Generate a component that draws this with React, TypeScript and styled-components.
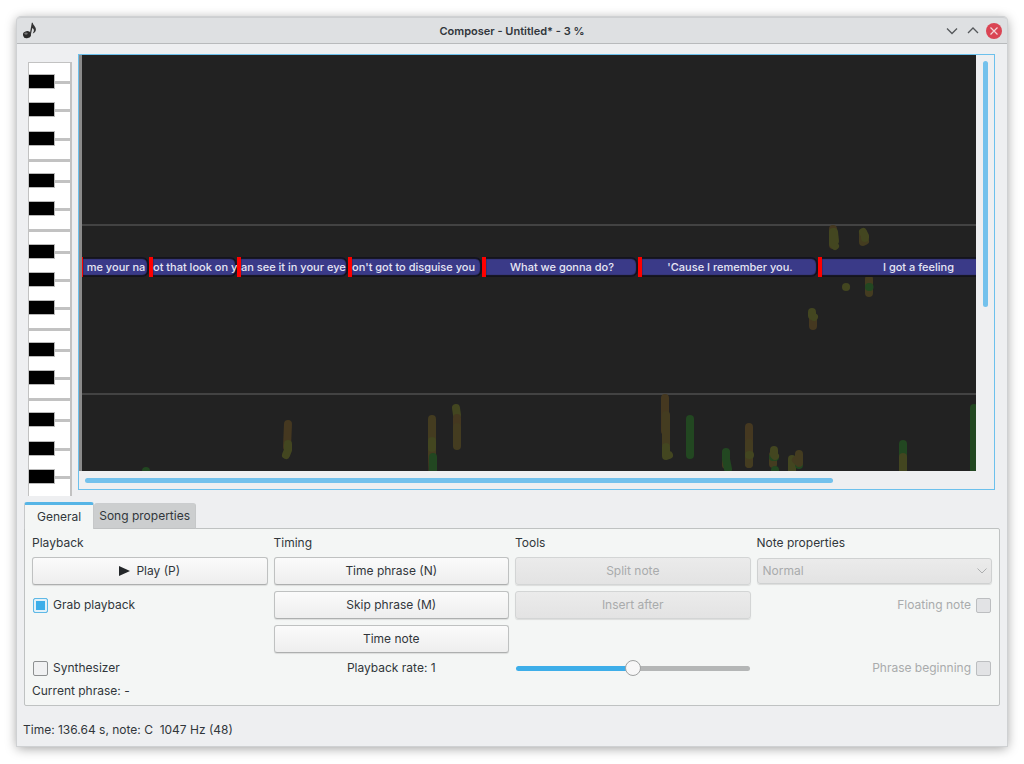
import React, { useState } from "react";
import styled, { createGlobalStyle } from "styled-components";

const GlobalStyle = createGlobalStyle`
  *, *::before, *::after { box-sizing: border-box; }
  body {
    margin: 0;
    background: #ffffff;
    color: #31363b;
    font: 12px/16px Inter, "Noto Sans", sans-serif;
  }
  button, input, select { font: inherit; color: inherit; margin: 0; }
`;

const Desktop = styled.div`
  display: flex;
  min-height: 100vh;
  padding: 17px 17px 18px;
`;

const Window = styled.div`
  flex: 1;
  min-width: 0;
  display: flex;
  flex-direction: column;
  background: #eeeff1;
  border-radius: 4px 4px 0 0;
  box-shadow: 0 0 0 1px #cfd1d3, 0 2px 12px rgba(0, 0, 0, 0.4);
`;

const TitleBar = styled.header`
  display: grid;
  grid-template-columns: 1fr auto 1fr;
  align-items: center;
  height: 27px;
  padding: 0 5px;
  background: #dee0e2;
  border-top: 1px solid #cdcfd1;
  border-bottom: 1px solid #b8babc;
  border-radius: 4px 4px 0 0;
`;

const Title = styled.h1`
  margin: 0;
  font-size: 11px;
  line-height: 16px;
  font-weight: 600;
`;

const WindowButtons = styled.div`
  display: flex;
  justify-content: flex-end;
  gap: 5px;
`;

const WindowButton = styled.button`
  display: flex;
  padding: 0;
  border: 0;
  background: none;
`;

const Editor = styled.main`
  flex: 1;
  display: flex;
  gap: 6px;
  padding: 10px 12px 0 11px;
`;

const Piano = styled.svg`
  flex: none;
  width: 44px;
  height: 434px;
  margin: 8px 0 6px;
`;

const ScoreFrame = styled.section`
  flex: 1;
  min-width: 0;
  display: grid;
  grid-template-columns: minmax(0, 1fr) 18px;
  grid-template-rows: minmax(0, 1fr) 18px;
  margin-bottom: 12px;
  border: 1px solid #6cc0ec;
`;

const Score = styled.div`
  position: relative;
  overflow: hidden;
  background: #222222;
  border-left: 3px solid #8a8a8a;
`;

const Pitch = styled.svg`
  position: absolute;
  top: 0;
  left: 0;
  width: 100%;
  height: 100%;
`;

const PhraseLane = styled.div`
  position: absolute;
  top: 202px;
  left: 0;
  display: flex;
  height: 20px;
`;

const Phrase = styled.div<{ $width: number; $start?: boolean }>`
  flex: none;
  display: flex;
  align-items: center;
  justify-content: ${(p) => (p.$start ? "flex-start" : "center")};
  width: ${(p) => p.$width}px;
  border-left: 4px solid #ff0000;
  background: #3a3a88;
  background-clip: padding-box;
  color: #e6e6f4;
  font-size: 11px;
  font-weight: 500;
  white-space: nowrap;
  border-radius: 0 7px 7px 0;
  box-shadow: inset 0 2px 1px #14141c, inset 0 -2px 1px #14141c, inset -2px 0 1px #14141c;
  &:first-child { border-left-width: 1px; }
`;

const ScrollTrack = styled.div<{ $vertical?: boolean }>`
  padding: ${(p) => (p.$vertical ? "6px 6px 0 7px" : "7px 0 6px 6px")};
`;

const ScrollThumb = styled.div<{ $vertical?: boolean }>`
  width: ${(p) => (p.$vertical ? "5px" : "84%")};
  height: ${(p) => (p.$vertical ? "60%" : "5px")};
  border-radius: 3px;
  background: #73c1ec;
`;

const Tabs = styled.div`
  display: flex;
  align-items: flex-end;
  padding: 0 7px;
  margin-bottom: -1px;
  z-index: 1;
`;

const Tab = styled.button<{ $active?: boolean }>`
  height: ${(p) => (p.$active ? 27 : 26)}px;
  padding: 0 ${(p) => (p.$active ? 12 : 5)}px;
  border: 1px solid #c6c8c9;
  border-top: ${(p) => (p.$active ? "3px solid #56b5e6" : "1px solid #cbcdcf")};
  border-bottom: ${(p) => (p.$active ? "0" : "1px solid #bfc1c2")};
  border-left-width: ${(p) => (p.$active ? 1 : 0)}px;
  border-radius: 3px 3px 0 0;
  background: ${(p) => (p.$active ? "#f4f6f5" : "#cccecf")};
`;

const Panel = styled.section`
  display: grid;
  grid-template-columns: repeat(4, minmax(0, 1fr));
  grid-template-rows: 16px 28px 28px 28px 18px 16px;
  gap: 6px;
  margin: 0 7px;
  padding: 6px 7px;
  border: 1px solid #bfc2c2;
  border-radius: 0 2px 2px 2px;
  background: #f4f6f5;
`;

const GroupTitle = styled.h2`
  margin: 0;
  font-size: 12px;
  line-height: 16px;
  font-weight: 400;
`;

const Button = styled.button`
  display: flex;
  align-items: center;
  justify-content: center;
  gap: 6px;
  border: 1px solid #bfc1c1;
  border-bottom-color: #adafaf;
  border-radius: 3px;
  background: linear-gradient(#fbfbfb, #eeeeee);
  box-shadow: 0 1px 1px rgba(0, 0, 0, 0.1);
  &:disabled {
    color: #a9abac;
    border-color: #d3d5d5;
    background: linear-gradient(#ebebeb, #e3e3e3);
  }
`;

const SelectWrap = styled.div`
  display: grid;
  align-items: center;
  & > * { grid-area: 1 / 1; }
  & > svg { justify-self: end; margin-right: 5px; pointer-events: none; }
`;

const Select = styled.select`
  appearance: none;
  height: 26px;
  padding: 0 5px;
  border: 1px solid #cfd1d1;
  border-radius: 3px;
  background: linear-gradient(#ebebeb, #e3e3e3);
  box-shadow: 0 1px 1px rgba(0, 0, 0, 0.1);
  &:disabled { color: #a9abac; opacity: 1; }
`;

const CheckLabel = styled.label<{ $row: number; $column: number; $trailing?: boolean }>`
  grid-row: ${(p) => p.$row};
  grid-column: ${(p) => p.$column};
  justify-self: ${(p) => (p.$trailing ? "end" : "start")};
  display: flex;
  flex-direction: ${(p) => (p.$trailing ? "row-reverse" : "row")};
  align-items: center;
  gap: 5px;
  padding: 0 1px;
  color: ${(p) => (p.$trailing ? "#a9abac" : "inherit")};
`;

const CheckBox = styled.input`
  appearance: none;
  width: 15px;
  height: 15px;
  border: 1px solid #8d9091;
  border-radius: 2px;
  background: #f0f1f2;
  &:checked {
    border-color: #5fb9e6;
    background: #3daee9;
    box-shadow: inset 0 0 0 2px #e2f1f9;
  }
  &:disabled { border-color: #bcbec0; background: #e2e3e5; }
`;

const Cell = styled.div<{ $row: number; $column: number }>`
  grid-row: ${(p) => p.$row};
  grid-column: ${(p) => p.$column};
  display: grid;
`;

const RateLabel = styled.label`
  grid-row: 5;
  grid-column: 2;
  align-self: center;
  justify-self: center;
`;

const Slider = styled.input`
  appearance: none;
  align-self: center;
  width: calc(100% - 2px);
  height: 16px;
  margin: 0 1px;
  background: transparent;
  &::-webkit-slider-runnable-track {
    height: 5px;
    border-radius: 3px;
    background: linear-gradient(to right, #3daee9 var(--filled), #b4b6b6 var(--filled));
  }
  &::-webkit-slider-thumb {
    appearance: none;
    width: 16px;
    height: 16px;
    margin-top: -6px;
    border: 1px solid #9fa1a1;
    border-radius: 50%;
    background: #f7f7f7;
  }
`;

const StatusBar = styled.footer`
  padding: 16px 6px 8px;
  white-space: pre;
`;

const OCTAVE = 169;
const BLACK_KEYS = [20, 48, 77, 119, 147, 190, 218, 246, 288, 316, 358, 387, 415];
const WHITE_GAPS = [98, 168, 267, 337];

function Keyboard() {
  return (
    <Piano viewBox="0 0 44 434" aria-label="Piano keyboard">
      <rect width="44" height="450" fill="#c2c2c2" />
      <rect x="1" y="1" width="41" height="440" fill="#ffffff" />
      {WHITE_GAPS.map((y) => (
        <rect key={y} x="1" y={y - 1} width="41" height="3" fill="#c2c2c2" />
      ))}
      {BLACK_KEYS.map((y) => (
        <g key={y}>
          <rect x="26" y={y - 1} width="16" height="3" fill="#c2c2c2" />
          <rect x="1" y={y - 8} width="26" height="15" fill="#b9b9b9" />
          <rect x="1" y={y - 7} width="25" height="13" fill="#000000" />
        </g>
      ))}
    </Piano>
  );
}

const OLIVE = "#434620";
const BROWN = "#453820";
const UMBER = "#443c20";
const GREEN = "#224721";

const TRACES: [string, string][] = [
  [GREEN, "M67 416V430"],
  [BROWN, "M209 369L208 392"],
  [OLIVE, "M209 389V395L207 400"],
  [UMBER, "M353 364V400L354 430"],
  [OLIVE, "M353 386V393"],
  [GREEN, "M354 402V430"],
  [OLIVE, "M377 353L378 360"],
  [BROWN, "M378 363V378"],
  [UMBER, "M378 372V391"],
  [BROWN, "M754 174V190"],
  [OLIVE, "M754 177V189L756 191M755 177L756 186"],
  [UMBER, "M784 178V187L786 186"],
  [OLIVE, "M784 177L786 181V183"],
  [OLIVE, "M767 232H767.1"],
  [UMBER, "M790 224V238"],
  [GREEN, "M790 232H790.5"],
  [BROWN, "M734 262V271"],
  [OLIVE, "M733 257V261L735 262"],
  [BROWN, "M586 343V376"],
  [UMBER, "M587 360V390"],
  [OLIVE, "M587 392V401L590 400"],
  [GREEN, "M611 364V400"],
  [UMBER, "M647 398V410"],
  [GREEN, "M647 397V404L649 414"],
  [BROWN, "M670 372V409"],
  [UMBER, "M670 388V409"],
  [OLIVE, "M670 400H671"],
  [UMBER, "M694 400V409"],
  [GREEN, "M694 402H696M696 415V416"],
  [OLIVE, "M695 395V400L696 401"],
  [OLIVE, "M713 404V430"],
  [GREEN, "M720 409V410"],
  [UMBER, "M720 399V408L717 405"],
  [GREEN, "M824 389V401"],
  [OLIVE, "M824 402V430"],
  [GREEN, "M895 353V430"],
];

const PHRASES: { text: string; width: number; start?: boolean }[] = [
  { text: "me your na", width: 67 },
  { text: "ot that look on y", width: 88, start: true },
  { text: "an see it in your eye", width: 111, start: true },
  { text: "on't got to disguise you", width: 134, start: true },
  { text: "What we gonna do?", width: 156 },
  { text: "'Cause I remember you.", width: 180 },
  { text: "I got a feeling", width: 197 },
];

function NoteIcon() {
  return (
    <svg width="16" height="18" viewBox="0 0 16 18" aria-hidden="true">
      <ellipse cx="5" cy="12.700" rx="4" ry="3.500" fill="#2b2b2b" transform="rotate(-15 5 12.700)" />
      <ellipse cx="4" cy="11.600" rx="1.800" ry="1.100" fill="#777777" />
      <path d="M7.600 13L9.800 0.800L10.800 0.800C10.900 3.500 14.300 4.600 13.900 8C13.600 9.800 12.200 11 10.700 11.400C12.300 9.300 12.500 7.200 10.300 6L8.800 13Z" fill="#333333" />
    </svg>
  );
}

function Chevron({ up }: { up?: boolean }) {
  return (
    <svg width="16" height="16" viewBox="0 0 16 16" fill="none" stroke="#55585b" strokeWidth="1.300" aria-hidden="true">
      <path d={up ? "M3 10L8 5L13 10" : "M3 5.500L8 10.500L13 5.500"} />
    </svg>
  );
}

export default function App() {
  const [rate, setRate] = useState(50);
  const [grab, setGrab] = useState(true);

  return (
    <>
      <GlobalStyle />
      <Desktop>
        <Window>
          <TitleBar>
            <NoteIcon />
            <Title>Composer - Untitled* - 3 %</Title>
            <WindowButtons>
              <WindowButton aria-label="Minimize"><Chevron /></WindowButton>
              <WindowButton aria-label="Maximize"><Chevron up /></WindowButton>
              <WindowButton aria-label="Close">
                <svg width="16" height="16" viewBox="0 0 16 16" aria-hidden="true">
                  <circle cx="8" cy="8" r="8" fill="#da4453" />
                  <path d="M4.500 4.500L11.500 11.500M11.500 4.500L4.500 11.500" stroke="#f3d5d8" strokeWidth="1.200" />
                </svg>
              </WindowButton>
            </WindowButtons>
          </TitleBar>

          <Editor>
            <Keyboard />
            <ScoreFrame>
              <Score>
                <Pitch aria-hidden="true">
                  <g stroke="#434343" strokeWidth="2">
                    <line x1="0" x2="100%" y1="170" y2="170" />
                    <line x1="0" x2="100%" y1={170 + OCTAVE} y2={170 + OCTAVE} />
                  </g>
                  <g transform="translate(-3 0)" fill="none" strokeWidth="8" strokeLinecap="round" strokeLinejoin="round">
                    {TRACES.map(([color, d]) => (
                      <path key={color + d} d={d} stroke={color} />
                    ))}
                  </g>
                </Pitch>
                <PhraseLane>
                  {PHRASES.map((p) => (
                    <Phrase key={p.text} $width={p.width} $start={p.start}>
                      {p.text}
                    </Phrase>
                  ))}
                </PhraseLane>
              </Score>
              <ScrollTrack $vertical><ScrollThumb $vertical /></ScrollTrack>
              <ScrollTrack><ScrollThumb /></ScrollTrack>
            </ScoreFrame>
          </Editor>

          <Tabs role="tablist">
            <Tab role="tab" aria-selected="true" $active>General</Tab>
            <Tab role="tab" aria-selected="false">Song properties</Tab>
          </Tabs>
          <Panel role="tabpanel">
            <GroupTitle>Playback</GroupTitle>
            <GroupTitle>Timing</GroupTitle>
            <GroupTitle>Tools</GroupTitle>
            <GroupTitle id="note-properties">Note properties</GroupTitle>

            <Button>
              <svg width="11" height="10" viewBox="0 0 11 10" aria-hidden="true">
                <path d="M0 0L11 5L0 10Z" fill="#232629" />
              </svg>
              Play (P)
            </Button>
            <Button>Time phrase (N)</Button>
            <Button disabled>Split note</Button>
            <SelectWrap>
              <Select disabled aria-labelledby="note-properties">
                <option>Normal</option>
              </Select>
              <svg width="10" height="6" viewBox="0 0 10 6" fill="none" stroke="#adafb0" aria-hidden="true">
                <path d="M0.500 0.500L5 5L9.500 0.500" />
              </svg>
            </SelectWrap>

            <CheckLabel $row={3} $column={1}>
              <CheckBox type="checkbox" checked={grab} onChange={(e) => setGrab(e.target.checked)} />
              Grab playback
            </CheckLabel>
            <Cell $row={3} $column={2}><Button>Skip phrase (M)</Button></Cell>
            <Cell $row={3} $column={3}><Button disabled>Insert after</Button></Cell>
            <CheckLabel $row={3} $column={4} $trailing>
              <CheckBox type="checkbox" disabled />
              Floating note
            </CheckLabel>

            <Cell $row={4} $column={2}><Button>Time note</Button></Cell>

            <CheckLabel $row={5} $column={1}>
              <CheckBox type="checkbox" />
              Synthesizer
            </CheckLabel>
            <RateLabel htmlFor="rate">Playback rate: 1</RateLabel>
            <Cell $row={5} $column={3}>
              <Slider
                id="rate"
                type="range"
                value={rate}
                onChange={(e) => setRate(Number(e.target.value))}
                style={{ "--filled": `${rate}%` } as React.CSSProperties}
              />
            </Cell>
            <CheckLabel $row={5} $column={4} $trailing>
              <CheckBox type="checkbox" disabled />
              Phrase beginning
            </CheckLabel>

            <Cell $row={6} $column={1}>Current phrase: -</Cell>
          </Panel>

          <StatusBar>Time: 136.64 s, note: C  1047 Hz (48)</StatusBar>
        </Window>
      </Desktop>
    </>
  );
}
